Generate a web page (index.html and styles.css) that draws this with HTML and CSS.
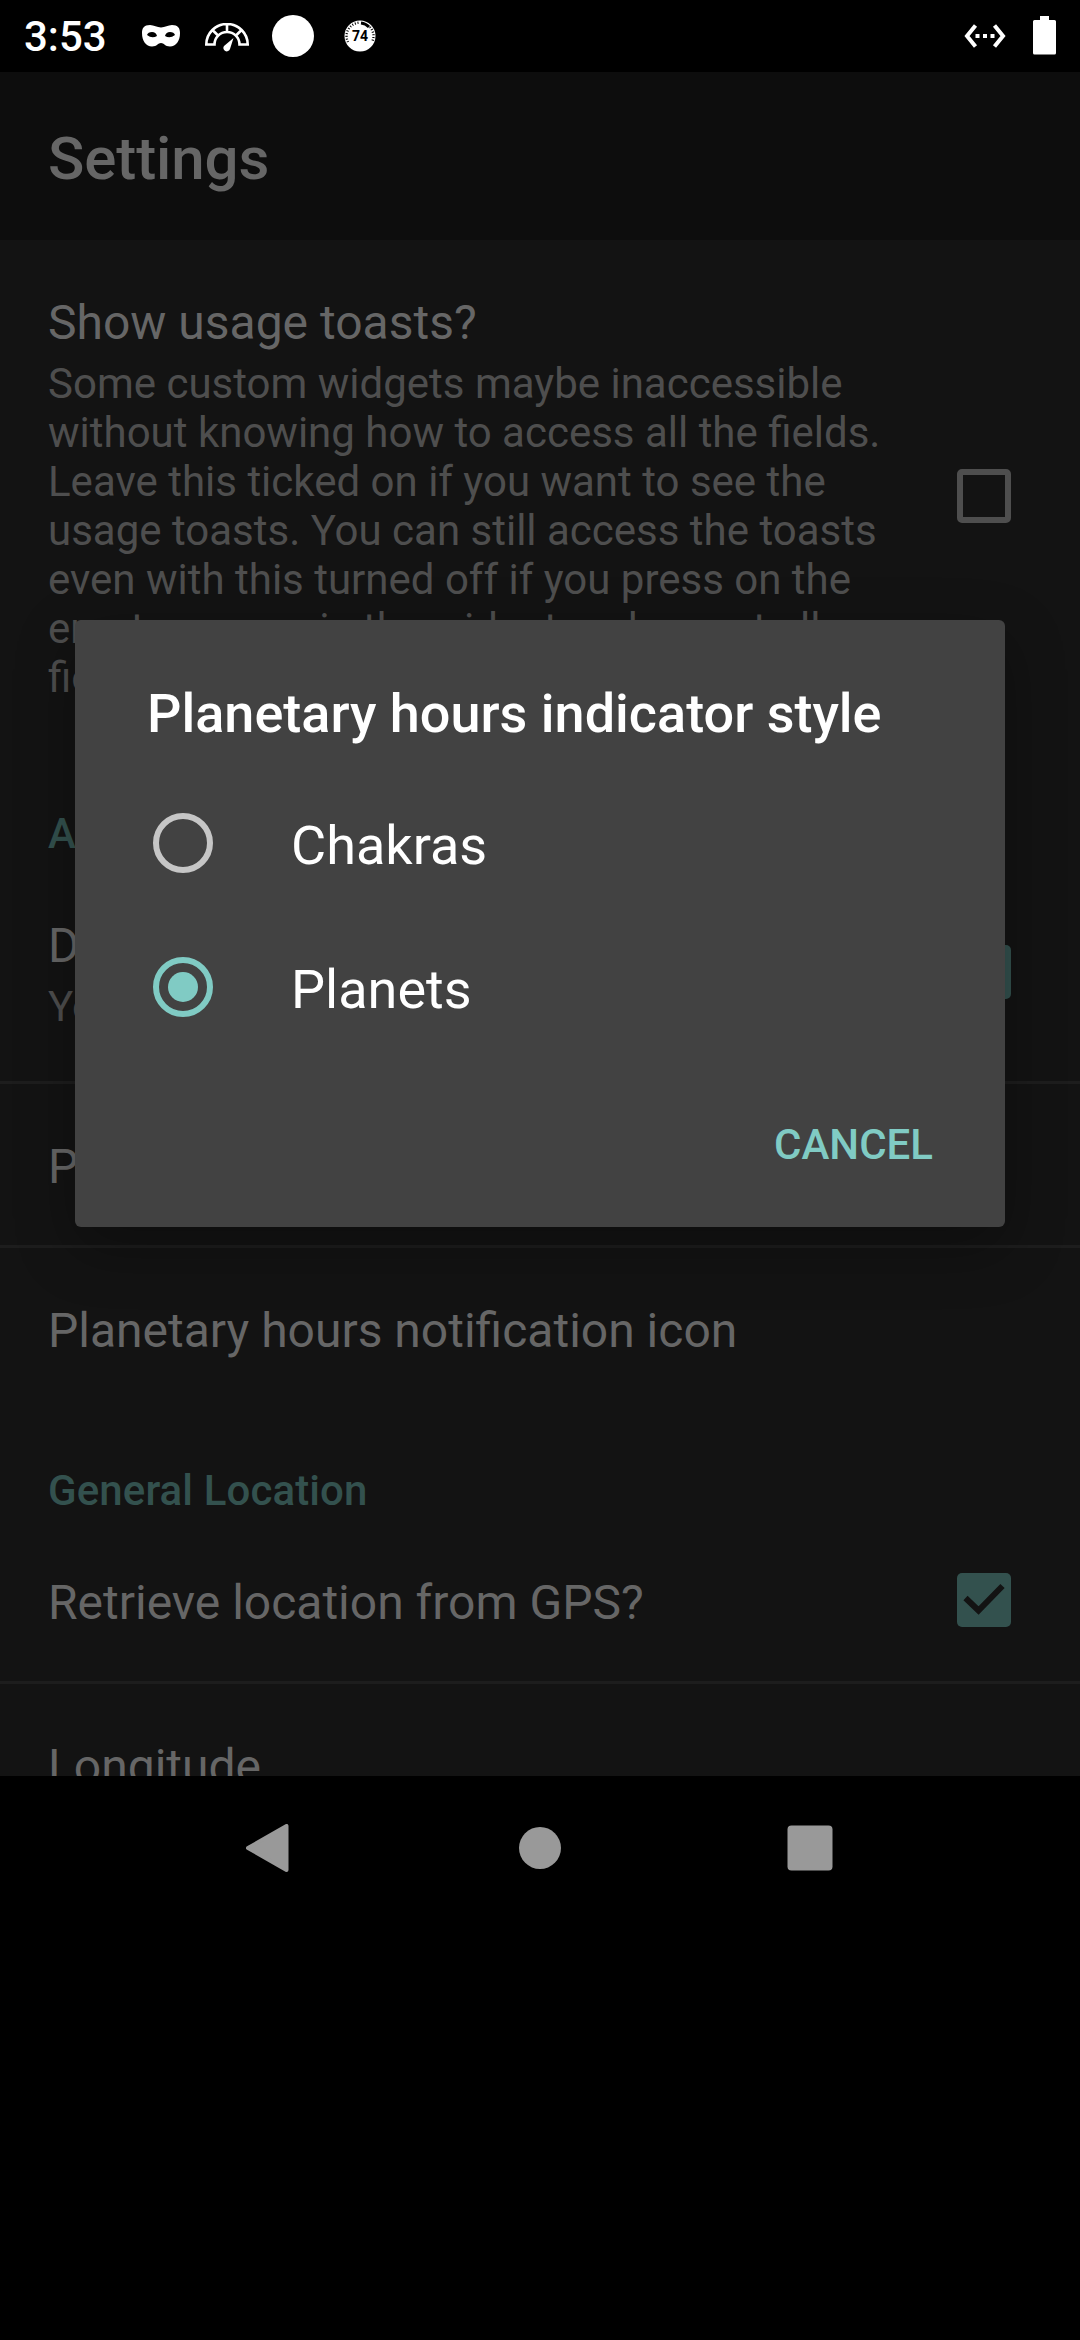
FILE: index.html
```html
<!DOCTYPE html>
<html lang="en">
<head>
<meta charset="utf-8">
<title>Settings</title>
<link rel="stylesheet" href="styles.css">
</head>
<body>
<div class="screen">
  <header class="status">
    <span class="clock">3:53</span>
    <svg class="icon-mask" width="40" height="24" viewBox="0 0 40 24"><path fill="#fff" fill-rule="evenodd" d="M9 1C13 1 16 3.500 20 3.500S27 1 31 1C37 1 39 4 39 9C39 17 35 22.500 29 22.500C24 22.500 23 19 20 19S16 22.500 11 22.500C5 22.500 1 17 1 9C1 4 3 1 9 1ZM6 11Q11 15 16 12Q15 8 11 8Q7 8 6 11ZM24 12Q29 15 34 11Q33 8 29 8Q25 8 24 12Z"/></svg>
    <svg class="icon-gauge" width="44" height="30" viewBox="0 0 44 30"><path fill="none" stroke="#fff" stroke-width="2.600" d="M1.300 21.500A20.700 20.500 0 0 1 42.700 21.500H34.500A12.500 12.500 0 0 0 9.500 21.500ZM22 1V9M7.500 7L13 12.500M36.500 7L31 12.500"/><path fill="#fff" d="M28.500 15L19 23A3.400 3.400 0 1 0 25 26Z"/></svg>
    <span class="dot"></span>
    <svg class="icon-badge" width="32" height="32" viewBox="0 0 32 32"><circle cx="16" cy="16" r="15.500" fill="#fff"/><path fill="none" stroke="#000" stroke-width="2.400" stroke-dasharray="1 1.700" d="M4 22A13.300 13.300 0 0 1 16 2.700M26 7A13.300 13.300 0 0 1 28 22"/><path fill="none" stroke="#000" stroke-width="3" d="M17 3A13 13 0 0 1 25 7"/><text class="badge-text" x="16" y="21" text-anchor="middle">74</text></svg>
    <span class="spacer"></span>
    <svg class="icon-net" width="42" height="24" viewBox="0 0 42 24"><path fill="none" stroke="#fff" stroke-width="4" d="M11.500 1.500L3 12L11.500 22.500M30.500 1.500L39 12L30.500 22.500"/><path fill="#fff" d="M11.500 10h4v4h-4zM19 10h4v4h-4zM26.500 10h4v4h-4z"/></svg>
    <svg class="icon-battery" width="23" height="39" viewBox="0 0 23 39"><path fill="#fff" d="M7 0h9v4h5.500q1.500 0 1.500 1.500v31.500q0 1.500-1.500 1.500h-20q-1.500 0-1.500-1.500v-31.500q0-1.500 1.500-1.500h5.500z"/></svg>
  </header>
  <main class="app">
    <h1 class="toolbar">Settings</h1>
    <section class="row row-toasts">
      <div class="text">
        <div class="name">Show usage toasts?</div>
        <div class="summary">Some custom widgets maybe inaccessible<br>without knowing how to access all the fields.<br>Leave this ticked on if you want to see the<br>usage toasts. You can still access the toasts<br>even with this turned off if you press on the<br>empty spaces in the widget and repeat all<br>fields.</div>
      </div>
      <span class="box"></span>
    </section>
    <h2 class="category">A</h2>
    <section class="row row-display">
      <div class="text">
        <div class="name">D</div>
        <div class="summary">Yo</div>
      </div>
      <span class="box checked"></span>
    </section>
    <section class="row line"><div class="name">P</div></section>
    <section class="row line"><div class="name">Planetary hours notification icon</div></section>
    <h2 class="category">General Location</h2>
    <section class="row row-gps">
      <div class="name">Retrieve location from GPS?</div>
      <span class="box checked"><svg width="54" height="54" viewBox="0 0 54 54"><path fill="none" stroke="#131313" stroke-width="6" d="M8.500 25L21.500 37.500L45.500 13"/></svg></span>
    </section>
    <section class="row line"><div class="name">Longitude</div></section>
  </main>
  <nav class="nav">
    <svg width="48" height="48" viewBox="0 0 48 48"><path fill="#999" stroke="#999" stroke-width="4" stroke-linejoin="round" d="M2 24L40.500 2V46Z"/></svg>
    <svg width="48" height="48" viewBox="0 0 48 48"><circle cx="24" cy="24" r="21" fill="#999"/></svg>
    <svg width="48" height="48" viewBox="0 0 48 48"><rect x="1.500" y="1.500" width="45" height="45" rx="4" fill="#999"/></svg>
  </nav>
  <div class="dialog">
    <h3 class="dialog-title">Planetary hours indicator style</h3>
    <div class="option"><span class="radio"></span><span class="label">Chakras</span></div>
    <div class="option"><span class="radio on"></span><span class="label">Planets</span></div>
    <div class="actions">CANCEL</div>
  </div>
</div>
</body>
</html>
```
FILE: styles.css
```css
* { box-sizing: border-box; }
body { margin: 0; background: #000; font-family: Roboto, sans-serif; }
h1, h2, h3 { margin: 0; font-weight: 500; }
svg { display: block; }
.screen { position: relative; width: 1080px; height: 2340px; overflow: hidden; background: #000; }

.status { display: flex; align-items: flex-start; height: 72px; padding: 0 24px; color: #fff; }
.clock { width: 118px; padding-top: 12px; font-size: 42px; line-height: 50px; font-weight: 500; }
.icon-mask { margin-top: 24px; margin-left: -1px; }
.icon-gauge { margin: 23px 0 0 24px; }
.dot { width: 42px; height: 42px; margin: 15px 0 0 23px; border-radius: 50%; background: #fff; }
.icon-badge { margin: 20px 0 0 30px; }
.badge-text { font-size: 14px; font-weight: 700; fill: #000; }
.spacer { flex: 1; }
.icon-net { margin-top: 24px; }
.icon-battery { margin: 16px 0 0 27px; }

.app { height: 1704px; overflow: hidden; background: #131313; color: #666; }
.toolbar { height: 168px; padding: 52px 48px 0; background: #0d0d0d; font-size: 60px; line-height: 70px; letter-spacing: -0.1px; }
.row { display: flex; height: 164px; padding: 0 48px; }
.line { border-top: 3px solid #1d1d1d; padding-top: 55px; }
.text { flex: 1; }
.name { flex: 1; font-size: 48px; line-height: 56px; }
.summary { padding-top: 8px; color: #4e4e4e; font-size: 42px; line-height: 49px; white-space: nowrap; }
.box { width: 54px; height: 54px; margin-right: 21px; border: 6px solid #4e4e4e; border-radius: 5px; }
.checked { border: 0; background: #33514e; }
.row-toasts { height: 512px; padding-top: 55px; }
.row-toasts .box { margin-top: 174px; }
.category { height: 110px; padding: 57px 48px 0; color: #33514e; font-size: 42px; line-height: 49px; letter-spacing: 0.1px; }
.row-display { height: 219px; padding-top: 56px; }
.row-display .box { margin-top: 27px; }
.row-gps { height: 162px; padding-top: 56px; }
.row-gps .box { margin-top: -2px; }

.nav { display: flex; justify-content: space-between; height: 144px; padding: 48px 246px; }

.dialog { position: absolute; left: 75px; top: 620px; width: 930px; height: 607px; padding: 62px 72px 0; border-radius: 6px; background: #424242; color: #fff; box-shadow: 0 20px 60px rgba(0, 0, 0, .3); }
.dialog-title { height: 89px; font-size: 54px; line-height: 63px; }
.option { display: flex; align-items: center; height: 144px; padding-left: 6px; font-size: 54px; }
.label { padding-top: 4px; }
.radio { display: flex; width: 60px; height: 60px; margin-right: 78px; align-items: center; justify-content: center; border: 6px solid #c6c6c6; border-radius: 50%; }
.on { border-color: #80cbc4; }
.on::after { content: ""; width: 30px; height: 30px; border-radius: 50%; background: #80cbc4; }
.actions { padding-top: 61px; color: #80cbc4; font-size: 42px; line-height: 49px; font-weight: 500; text-align: right; }
```
